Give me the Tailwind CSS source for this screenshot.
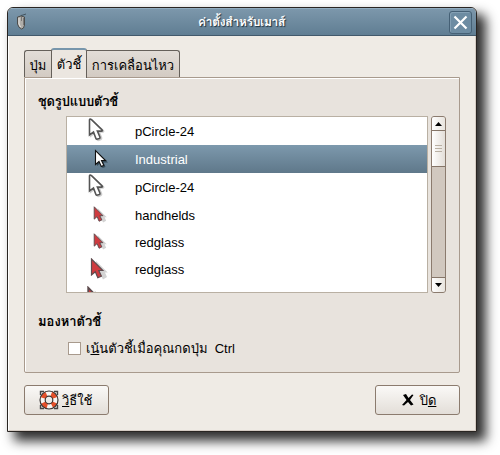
<!DOCTYPE html>
<html lang="th">
<head>
<meta charset="utf-8">
<title>ค่าตั้งสำหรับเมาส์</title>
<script src="https://cdn.jsdelivr.net/npm/@tailwindcss/browser@4"></script>
</head>
<body class="bg-white w-[500px] h-[455px] overflow-hidden pt-[7px] pl-[7px] text-[13px] text-black font-['Liberation_Sans','Loma','Noto_Sans_Thai_Looped','Noto_Sans_Thai','Noto_Sans',sans-serif]">
<svg width="0" height="0" class="absolute">
  <defs>
    <symbol id="outline" viewBox="0 0 18 24"><path d="M3 2V17.500L6.800 14.500L9.300 20.800Q9.900 22 11.200 21.600L13.200 20.800Q14.400 20.200 13.900 18.900L11.500 13.400H14.800Q17 13.200 15.400 11.600L5 2Q3.500.7 3 2Z" fill="#ccc" stroke="#ccc" stroke-width="1.500" transform="translate(.6 .7)"/><path d="M2.500 1.700V17l4-3 2.300 6.200q.5 1.300 1.700.9l1.600-.5q1.300-.5.7-1.900l-2.400-5.600h3.800Q16.300 13 14.800 11.600L4.500 1.700Q2.900.4 2.500 1.700Z" fill="#fff" stroke="#555" stroke-width="1.600"/></symbol>
    <symbol id="red" viewBox="0 0 18 22"><path d="M6 3v15l4-2 3 5.500 4-2.500-2-4.500h2.800Z" fill="#d3d3d3"/><path d="M1.500 1v16l3.800-3.300 2.500 6 3.600-1.600-2.600-5.600h4Z" fill="#cf3b3f" stroke="#5e4b4e" stroke-width="1.200"/></symbol>
  </defs>
</svg>
<main class="w-[470px] h-[425px] border border-[#292522] rounded-t-[6px] bg-[#efebe5] shadow-[8px_8px_12px_1px_rgba(0,0,0,0.82)] overflow-hidden flex flex-col">
  <header class="h-[28px] shrink-0 flex items-center border-t border-t-[#91acc0] border-b border-b-[#42596b] bg-linear-to-b from-[#7c97ab] to-[#607e93] pl-[7px] pr-[4px]">
    <svg width="14" height="18" viewBox="0 0 14 18"><path d="M6 5Q5 1.500 8 2L11 1" fill="none" stroke="#41535f"/><path d="M2.500 4Q6 2 9.500 4V12Q9 16 6.500 16Q3.500 15 2.500 11Z" fill="#b0aeaa" stroke="#4b4c4b"/><path d="M6.500 4V8" stroke="#777"/><path d="M4 5V11L5.500 14" fill="none" stroke="#e8e6e2"/><path d="M8.500 5V12" stroke="#777"/></svg>
    <h1 class="flex-1 pl-[5px] text-center text-white font-semibold text-[12px] leading-[20px] tracking-[-0.3px] [text-shadow:1px_1px_1px_#1f303c]">ค่าตั้งสำหรับเมาส์</h1>
    <div class="w-[23px] h-[23px] border border-[#456075] rounded-[3px] bg-[#6d8ca2] shadow-[inset_1px_1px_0_#84a0b4] flex items-center justify-center">
      <svg width="15" height="15" viewBox="0 0 15 15"><path d="M1.500 1.500L13.500 13.500M13.500 1.500L1.500 13.500" stroke="#fff" stroke-width="2.200"/></svg>
    </div>
  </header>
  <div class="flex-1 flex flex-col border-l border-l-white border-r border-r-[#d5ccc4] border-b border-b-[#d5ccc4] pl-[15px] pr-[15px]">
    <nav class="flex items-end h-[42px] shrink-0 pt-[12px] relative z-10">
      <div class="w-[27px] h-[27px] mb-px border border-b-0 border-r-0 border-[#65605a] rounded-tl-[3px] bg-linear-to-b from-[#e2ddd7] to-[#d3cbc3] text-center leading-[30px] whitespace-nowrap">ปุ่ม</div>
      <div class="w-[36px] h-[30px] border-x border-x-[#65605a] border-t-2 border-t-[#7796ac] rounded-t-[3px] bg-[#ebe6e0] text-center leading-[30px] whitespace-nowrap">ตัวชี้</div>
      <div class="w-[93px] h-[27px] mb-px border border-b-0 border-l-0 border-[#65605a] rounded-tr-[3px] bg-linear-to-b from-[#e2ddd7] to-[#d3cbc3] text-center leading-[30px] whitespace-nowrap">การเคลื่อนไหว</div>
    </nav>
    <section class="-mt-px w-[436px] h-[296px] border border-[#a89a8d] rounded-b-[2px] shadow-[inset_1px_1px_0_#fff] bg-[#e8e3dd] px-[13px] flex flex-col">
      <h2 class="h-[38px] pt-[13px] font-bold leading-[22px] tracking-[-0.2px] whitespace-nowrap">ชุดรูปแบบตัวชี้</h2>
      <div class="flex ml-[28px] h-[177px] gap-[3px]">
        <div class="w-[362px] h-[177px] border border-[#b9b0a3] bg-white overflow-hidden">
          <div class="h-[28px] flex items-center"><div class="w-[68px] pl-[20px]"><svg class="-mt-[2px]" width="18" height="24"><use href="#outline"/></svg></div><span class="pt-px">pCircle-24</span></div>
          <div class="h-[28px] flex items-center bg-linear-to-b from-[#7d99ad] to-[#5f788a] text-white"><div class="w-[68px] pl-[27px]"><svg width="15" height="20" viewBox="0 0 15 20"><path d="M3 3V17L6.500 14l2 5 3-1-2-4.500H14Z" fill="#354b59"/><path d="M1.500 1.500V15.500L5 12.500l2.300 5 2.500-1.200L7.500 11.500H11.500Z" fill="#fff" stroke="#111" stroke-width="1.100"/></svg></div><span class="pt-px">Industrial</span></div>
          <div class="h-[28px] flex items-center"><div class="w-[68px] pl-[20px]"><svg class="-mt-[2px]" width="18" height="24"><use href="#outline"/></svg></div><span class="pt-px">pCircle-24</span></div>
          <div class="h-[28px] flex items-center"><div class="w-[68px] pl-[26px]"><svg class="-mt-[2px]" width="14" height="17"><use href="#red"/></svg></div><span class="pt-px">handhelds</span></div>
          <div class="h-[27px] flex items-center"><div class="w-[68px] pl-[26px]"><svg class="-mt-[2px]" width="14" height="17"><use href="#red"/></svg></div><span>redglass</span></div>
          <div class="h-[27px] flex items-center"><div class="w-[68px] pl-[23px]"><svg class="-mt-px" width="18" height="22"><use href="#red"/></svg></div><span>redglass</span></div>
          <div class="h-[27px] pl-[19px] pt-[3px]"><svg width="26" height="32" viewBox="0 0 18 22"><use href="#red" width="18" height="22"/></svg></div>
        </div>
        <div class="w-[15px] h-[177px] border border-[#8b7b6e] rounded-[3px] bg-[#d1c8bf] flex flex-col overflow-hidden">
          <div class="h-[13px] bg-linear-to-r from-white to-[#e8e4de] flex items-center justify-center"><svg width="7" height="4"><path d="M0 4L3.500 0L7 4Z"/></svg></div>
          <div class="h-[37px] border-y border-[#857568] bg-linear-to-r from-white to-[#e3ded8] flex flex-col items-center justify-center gap-[2px]"><i class="w-[7px] h-px bg-[#b9b0a3]"></i><i class="w-[7px] h-px bg-[#b9b0a3]"></i><i class="w-[7px] h-px bg-[#b9b0a3]"></i></div>
          <div class="flex-1"></div>
          <div class="h-[15px] border-t border-[#857568] bg-linear-to-r from-white to-[#e8e4de] flex items-center justify-center"><svg width="7" height="4"><path d="M0 0L3.500 4L7 0Z"/></svg></div>
        </div>
      </div>
      <h2 class="mt-[18px] font-bold leading-[22px] whitespace-nowrap">มองหาตัวชี้</h2>
      <label class="ml-[30px] mt-[4px] h-[22px] flex items-center gap-[5px] whitespace-nowrap"><span class="w-[13px] h-[13px] border border-[#a89a8d] bg-white"></span><span class="pt-px">เ<u>น้</u>นตัวชี้เมื่อคุณกดปุ่ม&nbsp; Ctrl</span></label>
    </section>
    <footer class="mt-[12px] flex justify-between w-[436px]">
      <button class="w-[85px] h-[30px] border border-[#8b7b6e] rounded-[3px] bg-linear-to-b from-[#faf9f7] to-[#e3ded8] flex items-center pl-[14px] gap-[3px]">
        <svg width="20" height="20" viewBox="0 0 20 20"><path d="M1.500 5V1.500H5M15 1.500H18.500V5M18.500 15V18.500H15M5 18.500H1.500V15" fill="none" stroke="#444" stroke-width="1.400"/><circle cx="10" cy="10" r="6.300" fill="none" stroke="#f8f6f2" stroke-width="5"/><circle cx="10" cy="10" r="6.300" fill="none" stroke="#e4502a" stroke-width="5" stroke-dasharray="5.400 4.495" stroke-dashoffset="2.700" transform="rotate(38 10 10)"/><circle cx="10" cy="10" r="9" fill="none" stroke="#3a3634" stroke-width="1.200"/><circle cx="10" cy="10" r="3.800" fill="none" stroke="#3a3634" stroke-width="1.200"/></svg>
        <span class="pt-px"><u>วิ</u>ธีใช้</span>
      </button>
      <button class="w-[85px] h-[30px] border border-[#8b7b6e] rounded-[3px] bg-linear-to-b from-[#faf9f7] to-[#e3ded8] flex items-center justify-center pl-[3px] gap-[6px]">
        <svg width="12" height="12" viewBox="0 0 12 12"><path d="M1 1L4 0L6.500 4L10 .5L11.500 1L8 6L11.500 10.500L9 11.500L6 8L2 11.500L0 11L4.500 6Z"/></svg>
        <span class="pt-px">ปิ<u>ด</u></span>
      </button>
    </footer>
  </div>
</main>
</body>
</html>
